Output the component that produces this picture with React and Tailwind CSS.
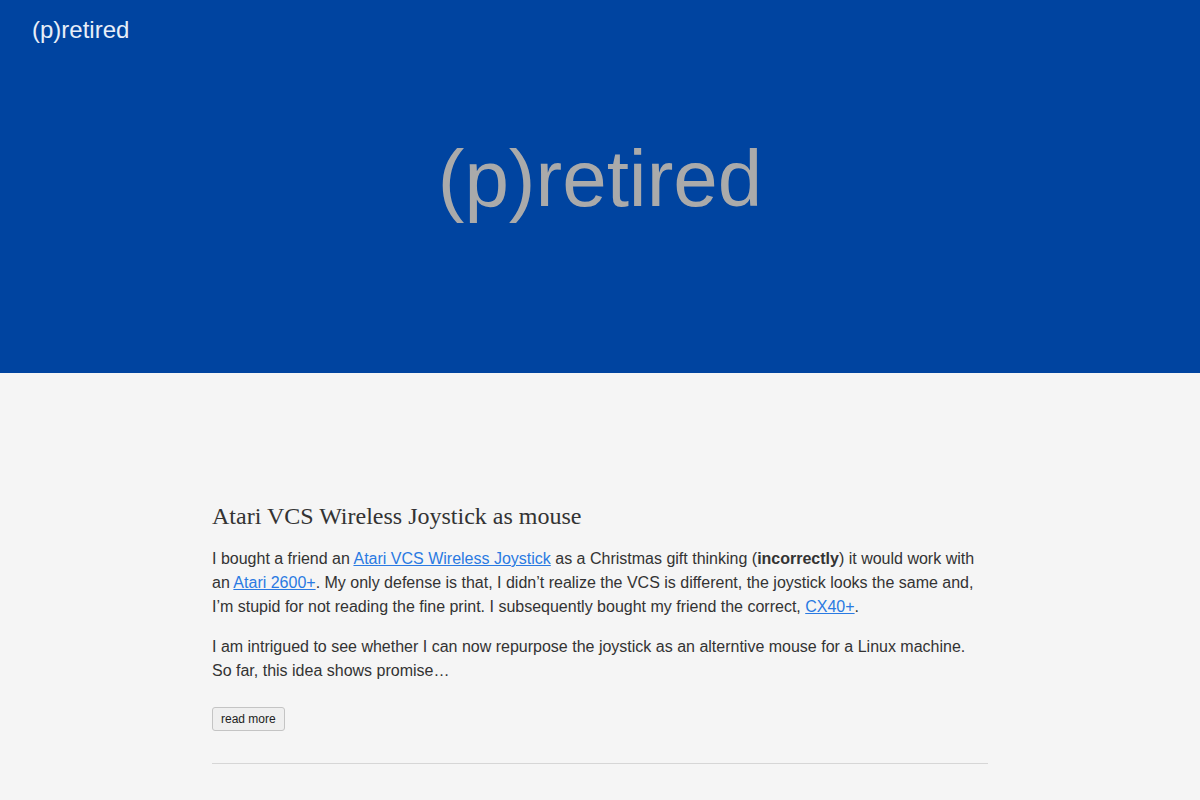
export default function App() {
  const link = "text-[#2a7ae2] underline";
  return (
    <div className="min-h-screen bg-[#f5f5f5] font-['Liberation_Sans',Arial,sans-serif] text-[#333]">
      <header className="bg-[#0044a0] h-[373px] flex flex-col">
        <div className="px-8 pt-[14px]">
          <a className="text-[24px] leading-[32px] text-[#e8eef8]">(p)retired</a>
        </div>
        <div className="flex-1 flex items-center justify-center pb-[62px]">
          <h1 className="text-[80px] leading-none text-[#aaaaaa]">(p)retired</h1>
        </div>
      </header>
      <main className="w-[776px] mx-auto pt-[127px]">
        <article className="pb-8 border-b border-[#d6d6d6]">
          <h2 className="font-['Liberation_Serif','Times_New_Roman',serif] text-[24px] leading-[32px] text-[#333] mb-[15px]">
            Atari VCS Wireless Joystick as mouse
          </h2>
          <p className="text-[16px] leading-[24px] mb-4">
            I bought a friend an <a className={link}>Atari VCS Wireless Joystick</a> as a Christmas gift thinking (
            <strong className="font-bold">incorrectly</strong>) it would work with an{" "}
            <a className={link}>Atari 2600+</a>. My only defense is that, I didn’t realize the VCS is different, the joystick looks the same and, I’m stupid for not reading the fine print. I subsequently bought my friend the correct,{" "}
            <a className={link}>CX40+</a>.
          </p>
          <p className="text-[16px] leading-[24px] mb-[23px]">
            I am intrigued to see whether I can now repurpose the joystick as an alterntive mouse for a Linux machine. So far, this idea shows promise…
          </p>
          <button className="text-[12px] leading-[14px] px-2 py-1 bg-[#efefef] border border-[#c4c4c4] rounded-[3px] text-[#222]">
            read more
          </button>
        </article>
      </main>
    </div>
  );
}
